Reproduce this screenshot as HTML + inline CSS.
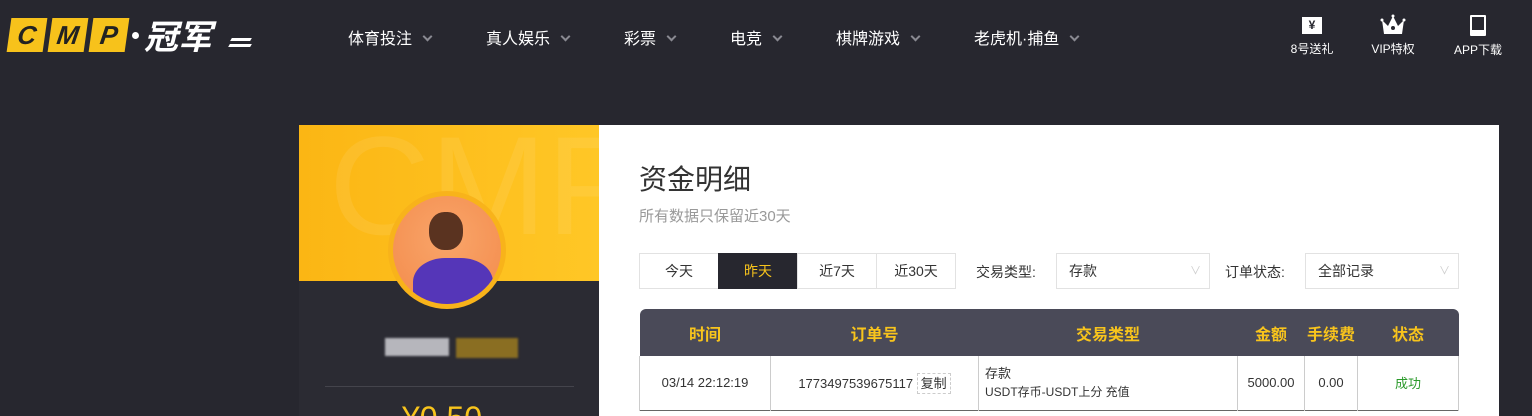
<!DOCTYPE html>
<html><head><meta charset="utf-8"><style>
*{margin:0;padding:0;box-sizing:border-box}
html,body{width:1532px;height:416px;overflow:hidden}
body{background:#27272f;font-family:"Liberation Sans","Noto Sans CJK SC",sans-serif;position:relative}
.a{position:absolute}
.nav{color:#fff;font-size:16px;top:25px}
.nav i{display:inline-block;width:7px;height:7px;border-right:2px solid #8a8a92;border-bottom:2px solid #8a8a92;transform:rotate(45deg);margin-left:12px;position:relative;top:-4px}
.ic{color:#fff;font-size:12px;text-align:center;width:70px;top:14px}
.box{position:absolute;top:253px;height:36px;border:1px solid #e2e2e2;font-size:14px;color:#333;line-height:34px}
th{color:#f8c41c;font-size:16px;font-weight:bold;height:47px}
td{font-size:13px;color:#333;text-align:center;border-right:1px solid #ccc;height:54px}
</style></head><body>
<div class="a" style="left:9px;top:18px;display:flex;gap:5px">
<div style="width:36px;height:34px;background:#f7c21b;transform:skewX(-8deg);font:italic bold 26px 'Liberation Sans';color:#222;text-align:center;line-height:34px">C</div>
<div style="width:36px;height:34px;background:#f7c21b;transform:skewX(-8deg);font:italic bold 26px 'Liberation Sans';color:#222;text-align:center;line-height:34px">M</div>
<div style="width:36px;height:34px;background:#f7c21b;transform:skewX(-8deg);font:italic bold 26px 'Liberation Sans';color:#222;text-align:center;line-height:34px">P</div>
</div>
<div class="a" style="left:132px;top:32px;width:7px;height:7px;border-radius:50%;background:#fff"></div>
<div class="a" style="left:144px;top:13px;color:#fff;font:italic bold 34px 'Noto Sans CJK SC',sans-serif;line-height:44px">冠军</div>
<div class="a" style="left:231px;top:38px;width:20px;height:3px;background:#fff;transform:skewX(-30deg)"></div>
<div class="a" style="left:229px;top:44px;width:22px;height:3px;background:#fff;transform:skewX(-30deg)"></div>
<div class="a nav" style="left:348px">体育投注<i></i></div>
<div class="a nav" style="left:486px">真人娱乐<i></i></div>
<div class="a nav" style="left:624px">彩票<i></i></div>
<div class="a nav" style="left:730px">电竞<i></i></div>
<div class="a nav" style="left:836px">棋牌游戏<i></i></div>
<div class="a nav" style="left:974px">老虎机·捕鱼<i></i></div>
<div class="a ic" style="left:1277px"><div style="margin:3px auto 6px;width:20px;height:17px;background:#fff;color:#27272f;font-size:12px;font-weight:bold;line-height:17px">¥</div>8号送礼</div>
<div class="a ic" style="left:1358px"><svg width="26" height="22" viewBox="0 0 26 22" style="display:block;margin:0 auto 4px"><path d="M2 6l6 6 5-10 5 10 6-6-2 14H4z" fill="#fff"/><circle cx="13" cy="2" r="1.5" fill="#fff"/><circle cx="2" cy="6" r="1.5" fill="#fff"/><circle cx="24" cy="6" r="1.5" fill="#fff"/><circle cx="13" cy="14" r="2" fill="#27272f"/></svg>VIP特权</div>
<div class="a ic" style="left:1443px"><div style="margin:1px auto 5px;width:16px;height:21px;border:2px solid #fff;border-bottom-width:6px;border-radius:1px"></div>APP下载</div>

<div class="a" style="left:299px;top:125px;width:300px;height:291px;background:#2b2b33"></div>
<div class="a" style="left:299px;top:125px;width:300px;height:156px;background:linear-gradient(90deg,#fbb614,#ffc726);overflow:hidden"><div style="position:absolute;left:30px;top:-20px;font:140px 'Liberation Sans';color:rgba(255,255,255,.08)">CMP</div></div>
<div class="a" style="left:388px;top:191px;width:118px;height:118px;border-radius:50%;background:#f8b31a;padding:5px"><div style="width:108px;height:108px;border-radius:50%;background:radial-gradient(circle at 50% 40%,#f9a56a,#f38a4a);overflow:hidden;position:relative"><div style="position:absolute;left:36px;top:16px;width:34px;height:38px;border-radius:45%;background:#5a3320"></div><div style="position:absolute;left:20px;top:62px;width:80px;height:60px;border-radius:40% 40% 0 0;background:#5536b8"></div></div></div>
<div class="a" style="left:385px;top:338px;width:64px;height:18px;background:#b6b6bc;filter:blur(1px)"></div>
<div class="a" style="left:456px;top:338px;width:62px;height:20px;background:#8a6e22;filter:blur(1px)"></div>
<div class="a" style="left:325px;top:386px;width:249px;height:1px;background:#44444c"></div>
<div class="a" style="left:402px;top:400px;color:#f8c41c;font-size:32px;line-height:36px">¥0.50</div>

<div class="a" style="left:599px;top:125px;width:900px;height:291px;background:#fff"></div>
<div class="a" style="left:639px;top:158px;font-size:28px;color:#333">资金明细</div>
<div class="a" style="left:639px;top:205px;font-size:15px;color:#999">所有数据只保留近30天</div>
<div class="box" style="left:639px;width:80px;text-align:center">今天</div>
<div class="box" style="left:718px;width:80px;text-align:center;background:#27272f;color:#f8c41c;border-color:#27272f">昨天</div>
<div class="box" style="left:797px;width:80px;text-align:center">近7天</div>
<div class="box" style="left:876px;width:80px;text-align:center">近30天</div>
<div class="a" style="left:976px;top:262px;font-size:14px;color:#333">交易类型:</div>
<div class="box" style="left:1056px;width:154px;padding-left:12px">存款<span style="position:absolute;right:8px;color:#ccc;font-size:11px">∨</span></div>
<div class="a" style="left:1225px;top:262px;font-size:14px;color:#333">订单状态:</div>
<div class="box" style="left:1305px;width:154px;padding-left:12px">全部记录<span style="position:absolute;right:8px;color:#ccc;font-size:11px">∨</span></div>

<table class="a" style="left:639px;top:309px;width:820px;border-collapse:collapse">
<tr style="background:#4a4a58"><th style="width:131px;border-radius:6px 0 0 0">时间</th><th style="width:208px">订单号</th><th style="width:259px">交易类型</th><th style="width:67px">金额</th><th style="width:53px">手续费</th><th style="border-radius:0 6px 0 0">状态</th></tr>
<tr style="border-bottom:1px solid #666"><td style="border-left:1px solid #ccc">03/14 22:12:19</td><td>1773497539675117 <span style="border:1px dashed #ccc;padding:2px 3px">复制</span></td><td style="text-align:left;padding-left:6px;line-height:18px">存款<br><span style="font-size:12px">USDT存币-USDT上分 充值</span></td><td>5000.00</td><td>0.00</td><td style="color:#2a9a2a">成功</td></tr>
</table>
</body></html>
